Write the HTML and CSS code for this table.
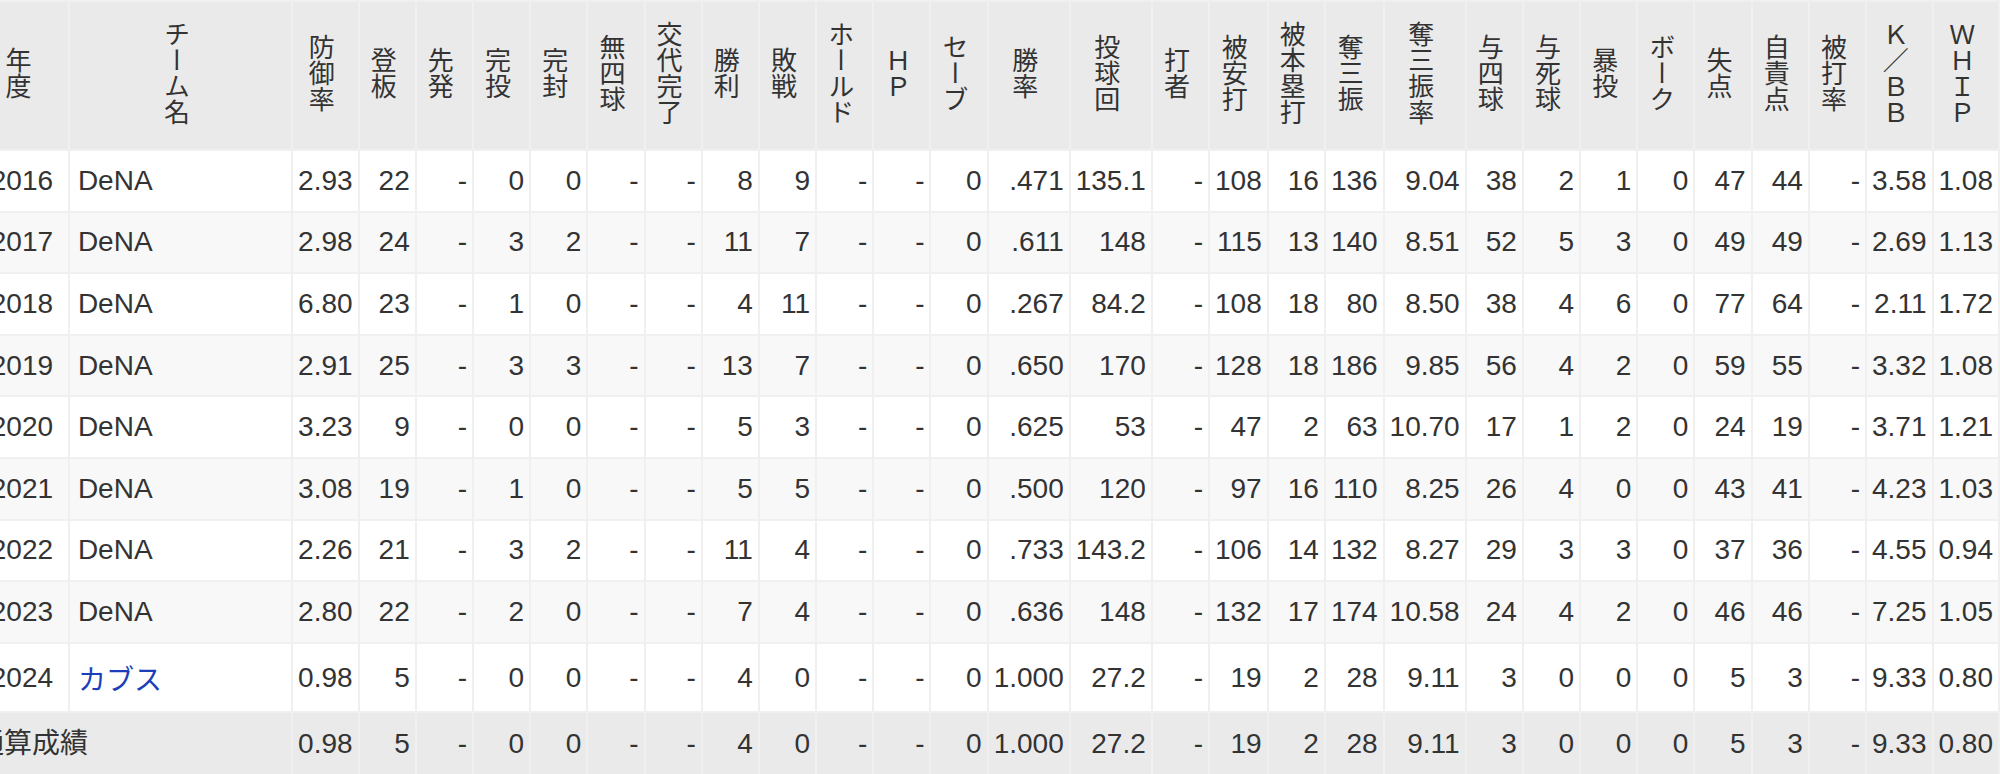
FILE: index.html
```html
<!DOCTYPE html>
<html lang="ja">
<head>
<meta charset="utf-8">
<title>年度別投手成績</title>
<link rel="stylesheet" href="styles.css">
</head>
<body>
<div class="scroller">
<table class="stats">
<thead>
<tr>
<th class="year"><span class="v">年度</span></th>
<th class="team"><span class="v">チーム名</span></th>
<th><span class="v">防御率</span></th>
<th><span class="v">登板</span></th>
<th><span class="v">先発</span></th>
<th><span class="v">完投</span></th>
<th><span class="v">完封</span></th>
<th><span class="v">無四球</span></th>
<th><span class="v">交代完了</span></th>
<th><span class="v">勝利</span></th>
<th><span class="v">敗戦</span></th>
<th><span class="v">ホールド</span></th>
<th><span class="v">ＨＰ</span></th>
<th><span class="v">セーブ</span></th>
<th><span class="v">勝率</span></th>
<th><span class="v">投球回</span></th>
<th><span class="v">打者</span></th>
<th><span class="v">被安打</span></th>
<th><span class="v">被本塁打</span></th>
<th><span class="v">奪三振</span></th>
<th><span class="v">奪三振率</span></th>
<th><span class="v">与四球</span></th>
<th><span class="v">与死球</span></th>
<th><span class="v">暴投</span></th>
<th><span class="v">ボーク</span></th>
<th><span class="v">失点</span></th>
<th><span class="v">自責点</span></th>
<th><span class="v">被打率</span></th>
<th><span class="v">Ｋ／ＢＢ</span></th>
<th><span class="v">ＷＨＩＰ</span></th>
</tr>
</thead>
<tbody>
<tr><td class="year">2016</td><td class="team">DeNA</td><td>2.93</td><td>22</td><td>-</td><td>0</td><td>0</td><td>-</td><td>-</td><td>8</td><td>9</td><td>-</td><td>-</td><td>0</td><td>.471</td><td>135.1</td><td>-</td><td>108</td><td>16</td><td>136</td><td>9.04</td><td>38</td><td>2</td><td>1</td><td>0</td><td>47</td><td>44</td><td>-</td><td>3.58</td><td>1.08</td></tr>
<tr><td class="year">2017</td><td class="team">DeNA</td><td>2.98</td><td>24</td><td>-</td><td>3</td><td>2</td><td>-</td><td>-</td><td>11</td><td>7</td><td>-</td><td>-</td><td>0</td><td>.611</td><td>148</td><td>-</td><td>115</td><td>13</td><td>140</td><td>8.51</td><td>52</td><td>5</td><td>3</td><td>0</td><td>49</td><td>49</td><td>-</td><td>2.69</td><td>1.13</td></tr>
<tr><td class="year">2018</td><td class="team">DeNA</td><td>6.80</td><td>23</td><td>-</td><td>1</td><td>0</td><td>-</td><td>-</td><td>4</td><td>11</td><td>-</td><td>-</td><td>0</td><td>.267</td><td>84.2</td><td>-</td><td>108</td><td>18</td><td>80</td><td>8.50</td><td>38</td><td>4</td><td>6</td><td>0</td><td>77</td><td>64</td><td>-</td><td>2.11</td><td>1.72</td></tr>
<tr><td class="year">2019</td><td class="team">DeNA</td><td>2.91</td><td>25</td><td>-</td><td>3</td><td>3</td><td>-</td><td>-</td><td>13</td><td>7</td><td>-</td><td>-</td><td>0</td><td>.650</td><td>170</td><td>-</td><td>128</td><td>18</td><td>186</td><td>9.85</td><td>56</td><td>4</td><td>2</td><td>0</td><td>59</td><td>55</td><td>-</td><td>3.32</td><td>1.08</td></tr>
<tr><td class="year">2020</td><td class="team">DeNA</td><td>3.23</td><td>9</td><td>-</td><td>0</td><td>0</td><td>-</td><td>-</td><td>5</td><td>3</td><td>-</td><td>-</td><td>0</td><td>.625</td><td>53</td><td>-</td><td>47</td><td>2</td><td>63</td><td>10.70</td><td>17</td><td>1</td><td>2</td><td>0</td><td>24</td><td>19</td><td>-</td><td>3.71</td><td>1.21</td></tr>
<tr><td class="year">2021</td><td class="team">DeNA</td><td>3.08</td><td>19</td><td>-</td><td>1</td><td>0</td><td>-</td><td>-</td><td>5</td><td>5</td><td>-</td><td>-</td><td>0</td><td>.500</td><td>120</td><td>-</td><td>97</td><td>16</td><td>110</td><td>8.25</td><td>26</td><td>4</td><td>0</td><td>0</td><td>43</td><td>41</td><td>-</td><td>4.23</td><td>1.03</td></tr>
<tr><td class="year">2022</td><td class="team">DeNA</td><td>2.26</td><td>21</td><td>-</td><td>3</td><td>2</td><td>-</td><td>-</td><td>11</td><td>4</td><td>-</td><td>-</td><td>0</td><td>.733</td><td>143.2</td><td>-</td><td>106</td><td>14</td><td>132</td><td>8.27</td><td>29</td><td>3</td><td>3</td><td>0</td><td>37</td><td>36</td><td>-</td><td>4.55</td><td>0.94</td></tr>
<tr><td class="year">2023</td><td class="team">DeNA</td><td>2.80</td><td>22</td><td>-</td><td>2</td><td>0</td><td>-</td><td>-</td><td>7</td><td>4</td><td>-</td><td>-</td><td>0</td><td>.636</td><td>148</td><td>-</td><td>132</td><td>17</td><td>174</td><td>10.58</td><td>24</td><td>4</td><td>2</td><td>0</td><td>46</td><td>46</td><td>-</td><td>7.25</td><td>1.05</td></tr>
<tr><td class="year">2024</td><td class="team"><a href="#">カブス</a></td><td>0.98</td><td>5</td><td>-</td><td>0</td><td>0</td><td>-</td><td>-</td><td>4</td><td>0</td><td>-</td><td>-</td><td>0</td><td>1.000</td><td>27.2</td><td>-</td><td>19</td><td>2</td><td>28</td><td>9.11</td><td>3</td><td>0</td><td>0</td><td>0</td><td>5</td><td>3</td><td>-</td><td>9.33</td><td>0.80</td></tr>
</tbody>
<tfoot>
<tr><td class="total" colspan="2">通算成績</td><td>0.98</td><td>5</td><td>-</td><td>0</td><td>0</td><td>-</td><td>-</td><td>4</td><td>0</td><td>-</td><td>-</td><td>0</td><td>1.000</td><td>27.2</td><td>-</td><td>19</td><td>2</td><td>28</td><td>9.11</td><td>3</td><td>0</td><td>0</td><td>0</td><td>5</td><td>3</td><td>-</td><td>9.33</td><td>0.80</td></tr>
</tfoot>
</table>
</div>
</body>
</html>
```

FILE: styles.css
```css
html, body {
  margin: 0;
  padding: 0;
  background: #ffffff;
  overflow: hidden;
}

.scroller {
  width: 2000px;
  overflow: hidden;
}

.stats {
  border-collapse: collapse;
  margin-left: -26px;
  font-family: "Liberation Sans", "Noto Sans CJK JP", sans-serif;
  font-size: 28px;
  color: #333333;
}

.stats th,
.stats td {
  border: 2px solid #f0f0f0;
}

.stats th {
  background: #eaeaea;
  font-weight: normal;
  font-size: 26px;
  padding: 19px 18.6px 24px 10.6px;
  line-height: 1;
  text-align: center;
  vertical-align: middle;
  font-family: "Noto Sans CJK JP", sans-serif;
}

.stats th .v {
  display: inline-block;
  vertical-align: top;
  writing-mode: vertical-rl;
  text-orientation: upright;
  line-height: 1;
}

.stats td {
  padding: 13.8px 5px;
  text-align: right;
  white-space: nowrap;
}

.stats tbody tr:nth-child(even) td {
  background: #f8f8f8;
}

.stats tfoot td {
  background: #eaeaea;
  line-height: 34px;
}

.stats .year {
  box-sizing: border-box;
  width: 94px;
}

.stats .team {
  box-sizing: border-box;
  width: 224px;
}

.stats td.year {
  padding-left: 6px;
  padding-right: 6px;
  text-align: center;
}

.stats td.team {
  padding-left: 8px;
  padding-right: 6px;
  text-align: left;
}

.stats td.total {
  text-align: left;
  padding-left: 0;
}

.stats a {
  color: #1a3fb8;
  text-decoration: none;
}
```
